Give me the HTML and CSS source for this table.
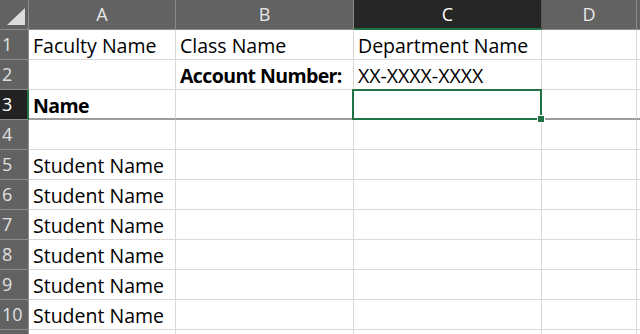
FILE: index.html
```html
<!DOCTYPE html>
<html>
<head>
<meta charset="utf-8">
<link rel="stylesheet" href="styles.css">
</head>
<body>
<div class="sheet">
  <div class="hd corner"><svg class="tri" width="18" height="17" viewBox="0 0 18 17"><polygon points="18,0 18,17 0,17" fill="#dcdcdc"/></svg></div>
  <div class="hd">A</div>
  <div class="hd">B</div>
  <div class="hd hd-sel">C</div>
  <div class="hd">D</div>
  <div class="hd"></div>

  <div class="rh">1</div>
  <div class="c">Faculty Name</div>
  <div class="c">Class Name</div>
  <div class="c">Department Name</div>
  <div class="c"></div>
  <div class="c"></div>

  <div class="rh">2</div>
  <div class="c"></div>
  <div class="c b">Account Number:</div>
  <div class="c">XX-XXXX-XXXX</div>
  <div class="c"></div>
  <div class="c"></div>

  <div class="rh rh-sel">3</div>
  <div class="c b r3">Name</div>
  <div class="c r3"></div>
  <div class="c r3 active"><span class="selbox"><span class="handle"></span></span></div>
  <div class="c r3"></div>
  <div class="c r3"></div>

  <div class="rh">4</div>
  <div class="c"></div>
  <div class="c"></div>
  <div class="c"></div>
  <div class="c"></div>
  <div class="c"></div>

  <div class="rh">5</div>
  <div class="c">Student Name</div>
  <div class="c"></div>
  <div class="c"></div>
  <div class="c"></div>
  <div class="c"></div>

  <div class="rh">6</div>
  <div class="c">Student Name</div>
  <div class="c"></div>
  <div class="c"></div>
  <div class="c"></div>
  <div class="c"></div>

  <div class="rh">7</div>
  <div class="c">Student Name</div>
  <div class="c"></div>
  <div class="c"></div>
  <div class="c"></div>
  <div class="c"></div>

  <div class="rh">8</div>
  <div class="c">Student Name</div>
  <div class="c"></div>
  <div class="c"></div>
  <div class="c"></div>
  <div class="c"></div>

  <div class="rh">9</div>
  <div class="c">Student Name</div>
  <div class="c"></div>
  <div class="c"></div>
  <div class="c"></div>
  <div class="c"></div>

  <div class="rh">10</div>
  <div class="c">Student Name</div>
  <div class="c"></div>
  <div class="c"></div>
  <div class="c"></div>
  <div class="c"></div>

  <div class="rh"></div>
  <div class="c"></div>
  <div class="c"></div>
  <div class="c"></div>
  <div class="c"></div>
  <div class="c"></div>
</div>
</body>
</html>
```
FILE: styles.css
```css
html, body {
  margin: 0;
  padding: 0;
  background: #ffffff;
  overflow: hidden;
  width: 640px;
  height: 334px;
}

.sheet {
  display: grid;
  grid-template-columns: 29px 147px 178px 188px 95px 1fr;
  grid-auto-rows: 30px;
  font-family: "Open Sans", "Noto Sans", sans-serif;
  font-size: 19.5px;
  color: #000;
}

.sheet > div {
  box-sizing: border-box;
  white-space: nowrap;
  overflow: visible;
}

.hd {
  background: #626262;
  color: #e8e8e8;
  border-right: 1px solid #8c8c8c;
  border-bottom: 1px solid #8c8c8c;
  font-size: 18px;
  line-height: 29px;
  text-align: center;
}

.corner {
  position: relative;
}

.tri {
  position: absolute;
  left: 7px;
  top: 8px;
}

.hd-sel {
  background: #262626;
  color: #ffffff;
  border-bottom: 2px solid #217346;
  border-right-color: #5a5a5a;
}

.rh {
  background: #626262;
  color: #e0e0e0;
  border-right: 1px solid #8c8c8c;
  border-bottom: 1px solid #8c8c8c;
  font-size: 18px;
  line-height: 29px;
  padding-left: 2px;
}

.rh-sel {
  background: #222222;
  color: #ffffff;
  border-right: 2px solid #217346;
}

.c {
  border-right: 1px solid #d9d9d9;
  border-bottom: 1px solid #d9d9d9;
  line-height: 29px;
  padding-left: 4px;
  padding-top: 1px;
}

.b {
  font-weight: 700;
  letter-spacing: -0.6px;
}

.r3 {
  border-bottom: 2px solid #9e9e9e;
}

.active {
  position: relative;
}

.selbox {
  position: absolute;
  left: -2px;
  top: -1px;
  right: -1px;
  bottom: -2px;
  border: 2px solid #217346;
}

.handle {
  position: absolute;
  right: -5px;
  bottom: -5px;
  width: 6px;
  height: 6px;
  background: #217346;
  border: 1px solid #ffffff;
}
```
